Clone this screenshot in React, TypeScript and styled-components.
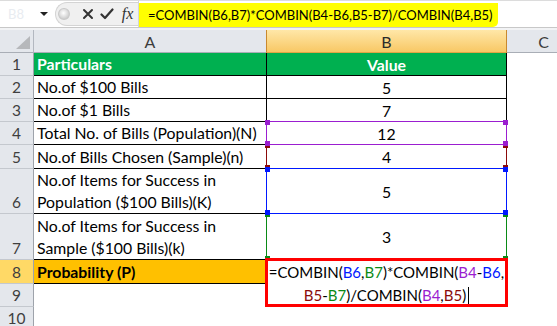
import React from 'react';
import styled, { createGlobalStyle } from 'styled-components';

const FONT = `"Lato", "Open Sans", "Liberation Sans", sans-serif`;

const GlobalStyle = createGlobalStyle`
  html, body { margin: 0; padding: 0; background: #ffffff; }
  body { width: 557px; height: 326px; overflow: hidden; font-family: ${FONT}; }
  * { box-sizing: border-box; }
`;

const Page = styled.div`
  width: 557px;
  height: 326px;
  overflow: hidden;
  background: #fff;
`;

/* ---------- formula bar ---------- */
const Toolbar = styled.div`
  height: 30px;
  display: flex;
  flex-direction: column;
  background: #eef0f3;
`;
const ToolRow = styled.div`
  height: 28px;
  display: flex;
  align-items: stretch;
  background: #fff;
  border-top: 1px solid #dcdcdc;
  border-bottom: 1px solid #c8c8c8;
`;
const NameBox = styled.div`
  width: 55px;
  display: flex;
  align-items: center;
  justify-content: space-between;
  padding: 0 7px 0 8px;
  font-size: 13px;
  color: #e8ecf1;
`;
const DropArrow = styled.span`
  width: 0;
  height: 0;
  border-left: 4px solid transparent;
  border-right: 4px solid transparent;
  border-top: 4px solid #222;
`;
const ButtonGroup = styled.div`
  width: 83px;
  display: flex;
  align-items: center;
  background: #f0f0f0;
  border: 1px solid #d4d4d4;
  border-right: none;
  border-radius: 12px 0 0 12px;
  margin: 1px 0 1px 0;
  padding-left: 2px;
`;
const Knob = styled.span`
  width: 12px;
  height: 12px;
  border-radius: 50%;
  background: radial-gradient(circle at 45% 40%, #ffffff 0%, #e0e0e0 45%, #b9b9b9 100%);
  border: 1px solid #c9c9c9;
  margin-right: 9px;
`;
const ToolIcon = styled.span`
  width: 20px;
  display: flex;
  align-items: center;
  justify-content: center;
`;
const Fx = styled.span`
  font-family: "Liberation Serif", serif;
  font-style: italic;
  font-size: 16px;
  color: #333;
  width: 22px;
  text-align: center;
`;
const FormulaField = styled.div`
  flex: 1;
  display: flex;
  align-items: center;
  border-left: 1px solid #d4d4d4;
`;
const Highlight = styled.div`
  height: 24px;
  margin-top: 1px;
  display: flex;
  align-items: center;
  background: #ffff00;
  padding: 0 5px 0 9px;
  border-radius: 0 0 5px 0;
  font-size: 13px;
  color: #000;
  white-space: nowrap;
`;
const ToolGap = styled.div`
  flex: 1;
  background: #f2f3f5;
`;

/* ---------- sheet ---------- */
const Sheet = styled.div`
  display: grid;
  grid-template-columns: 34px 233px 240px 74px;
  grid-template-rows: 23px 23px 23px 23px 23px 24px 45px 46px 24px 23px 23px;
`;
const Corner = styled.div`
  position: relative;
  background: #e4e7ec;
  border-right: 1px solid #b3b8c0;
  border-bottom: 1px solid #a9aeb6;
  &::after {
    content: '';
    position: absolute;
    right: 3px;
    bottom: 3px;
    width: 0;
    height: 0;
    border-left: 14px solid transparent;
    border-bottom: 13px solid #b6b8bb;
  }
`;
const ColHeader = styled.div<{ $sel?: boolean }>`
  display: flex;
  align-items: center;
  justify-content: center;
  font-size: 16px;
  color: ${(p) => (p.$sel ? '#2b2b2b' : '#3c3c3c')};
  background: ${(p) => (p.$sel ? 'linear-gradient(#ffe7a8, #f8c865)' : '#e4e7ec')};
  border-right: 1px solid ${(p) => (p.$sel ? '#c9892e' : '#c3c7cd')};
  border-bottom: 1px solid ${(p) => (p.$sel ? '#e2a544' : '#a9aeb6')};
  ${(p) => (p.$sel ? 'margin-left: -1px; border-left: 1px solid #c9892e;' : '')}
`;
const RowHeader = styled.div<{ $sel?: boolean }>`
  display: flex;
  align-items: flex-end;
  justify-content: center;
  line-height: 22px;
  font-size: 15.5px;
  color: #3f3f3f;
  background: ${(p) => (p.$sel ? '#ffd966' : '#e4e7ec')};
  border-right: 1px solid #9ea3ab;
  border-bottom: 1px solid #c4c8ce;
`;
type Tone = 'head' | 'total' | 'plain' | 'blank';
const bgOf = (t: Tone) => (t === 'head' ? '#00b050' : t === 'total' ? '#ffc000' : '#ffffff');
const TextCell = styled.div<{ $tone: Tone }>`
  display: flex;
  flex-direction: column;
  justify-content: flex-end;
  padding-left: 3px;
  line-height: 22px;
  font-size: 15.8px;
  white-space: nowrap;
  color: ${(p) => (p.$tone === 'head' ? '#ffffff' : '#000000')};
  font-weight: ${(p) => (p.$tone === 'head' || p.$tone === 'total' ? 700 : 400)};
  background: ${(p) => bgOf(p.$tone)};
  border-right: 1px solid ${(p) => (p.$tone === 'blank' ? 'transparent' : '#000')};
  border-bottom: 1px solid ${(p) => (p.$tone === 'blank' ? 'transparent' : '#000')};
`;
const ValueCell = styled.div<{ $tone: Tone }>`
  position: relative;
  display: flex;
  align-items: center;
  justify-content: center;
  font-size: 15.8px;
  color: ${(p) => (p.$tone === 'head' ? '#ffffff' : '#000000')};
  font-weight: ${(p) => (p.$tone === 'head' ? 700 : 400)};
  background: ${(p) => bgOf(p.$tone)};
  border-right: 1px solid ${(p) => (p.$tone === 'blank' ? 'transparent' : '#000')};
  border-bottom: 1px solid ${(p) => (p.$tone === 'blank' ? 'transparent' : '#000')};
`;
const EmptyCell = styled.div`
  background: #fff;
`;

/* colored reference boxes over column B */
const RangeBox = styled.div<{ $c: string; $z: number }>`
  position: absolute;
  top: -1px;
  left: -1px;
  right: -1px;
  bottom: -1px;
  border: 1px solid ${(p) => p.$c};
  z-index: ${(p) => p.$z};
  pointer-events: none;
`;
const Handle = styled.span<{ $c: string; $v: 'top' | 'bottom'; $h: 'left' | 'right' }>`
  position: absolute;
  width: 5px;
  height: 5px;
  background: ${(p) => p.$c};
  ${(p) => p.$v}: -2px;
  ${(p) => p.$h}: -2px;
`;

const EditBox = styled.div`
  position: absolute;
  top: -2px;
  left: -2px;
  right: -2px;
  height: 49px;
  border: 3px solid #ff0000;
  background: #fff;
  z-index: 10;
  font-size: 15px;
  font-weight: 400;
  line-height: 23px;
  text-align: center;
  color: #000;
  white-space: nowrap;
`;
const Ref = styled.span<{ $c: string }>`
  color: ${(p) => p.$c};
`;
const Caret = styled.span`
  display: inline-block;
  width: 1px;
  height: 17px;
  background: #000;
  vertical-align: -3px;
  margin-left: 2px;
`;

const C4 = '#9b1ed0';
const C5 = '#8b0a0a';
const C6 = '#0018ff';
const C7 = '#0a8a16';

type Row = {
  n: number;
  a?: string[];
  b?: string;
  tone: Tone;
  range?: { c: string; z: number };
};

const rows: Row[] = [
  { n: 1, a: ['Particulars'], b: 'Value', tone: 'head' },
  { n: 2, a: ['No.of $100 Bills'], b: '5', tone: 'plain' },
  { n: 3, a: ['No.of $1 Bills'], b: '7', tone: 'plain' },
  { n: 4, a: ['Total No. of Bills (Population)(N)'], b: '12', tone: 'plain', range: { c: C4, z: 3 } },
  { n: 5, a: ['No.of Bills Chosen (Sample)(n)'], b: '4', tone: 'plain', range: { c: C5, z: 1 } },
  { n: 6, a: ['No.of Items for Success in', 'Population ($100 Bills)(K)'], b: '5', tone: 'plain', range: { c: C6, z: 3 } },
  { n: 7, a: ['No.of Items for Success in', 'Sample ($100 Bills)(k)'], b: '3', tone: 'plain', range: { c: C7, z: 1 } },
  { n: 8, a: ['Probability (P)'], tone: 'total' },
  { n: 9, tone: 'blank' },
  { n: 10, tone: 'blank' },
];

const XIcon = () => (
  <svg width="12" height="12" viewBox="0 0 12 12">
    <path d="M2 2 L10 10 M10 2 L2 10" stroke="#333" strokeWidth="2" strokeLinecap="round" />
  </svg>
);
const CheckIcon = () => (
  <svg width="14" height="12" viewBox="0 0 14 12">
    <path d="M1.5 6.5 L5 10 L12.5 1.5" stroke="#333" strokeWidth="2.2" fill="none" strokeLinecap="round" strokeLinejoin="round" />
  </svg>
);

const handles = (c: string) => (
  <>
    <Handle $c={c} $v="top" $h="left" />
    <Handle $c={c} $v="top" $h="right" />
    <Handle $c={c} $v="bottom" $h="left" />
    <Handle $c={c} $v="bottom" $h="right" />
  </>
);

export default function App() {
  return (
    <Page>
      <GlobalStyle />
      <Toolbar>
        <ToolRow>
          <NameBox>
            <span>B8</span>
            <DropArrow />
          </NameBox>
          <ButtonGroup>
            <Knob />
            <ToolIcon>
              <XIcon />
            </ToolIcon>
            <ToolIcon>
              <CheckIcon />
            </ToolIcon>
            <Fx>fx</Fx>
          </ButtonGroup>
          <FormulaField>
            <Highlight>=COMBIN(B6,B7)*COMBIN(B4-B6,B5-B7)/COMBIN(B4,B5)</Highlight>
          </FormulaField>
        </ToolRow>
        <ToolGap />
      </Toolbar>
      <Sheet>
        <Corner />
        <ColHeader>A</ColHeader>
        <ColHeader $sel>B</ColHeader>
        <ColHeader>C</ColHeader>
        {rows.map((r) => (
          <React.Fragment key={r.n}>
            <RowHeader $sel={r.n === 8}>{r.n}</RowHeader>
            <TextCell $tone={r.tone}>
              {(r.a ?? []).map((line) => (
                <span key={line}>{line}</span>
              ))}
            </TextCell>
            <ValueCell $tone={r.tone}>
              {r.b}
              {r.range && (
                <RangeBox $c={r.range.c} $z={r.range.z}>
                  {handles(r.range.c)}
                </RangeBox>
              )}
              {r.n === 8 && (
                <EditBox>
                  =COMBIN(<Ref $c={C6}>B6</Ref>,<Ref $c={C7}>B7</Ref>)*COMBIN(<Ref $c={C4}>B4</Ref>-
                  <Ref $c={C6}>B6</Ref>,
                  <br />
                  <Ref $c={C5}>B5</Ref>-<Ref $c={C7}>B7</Ref>)/COMBIN(<Ref $c={C4}>B4</Ref>,
                  <Ref $c={C5}>B5</Ref>)
                  <Caret />
                </EditBox>
              )}
            </ValueCell>
            <EmptyCell />
          </React.Fragment>
        ))}
      </Sheet>
    </Page>
  );
}
